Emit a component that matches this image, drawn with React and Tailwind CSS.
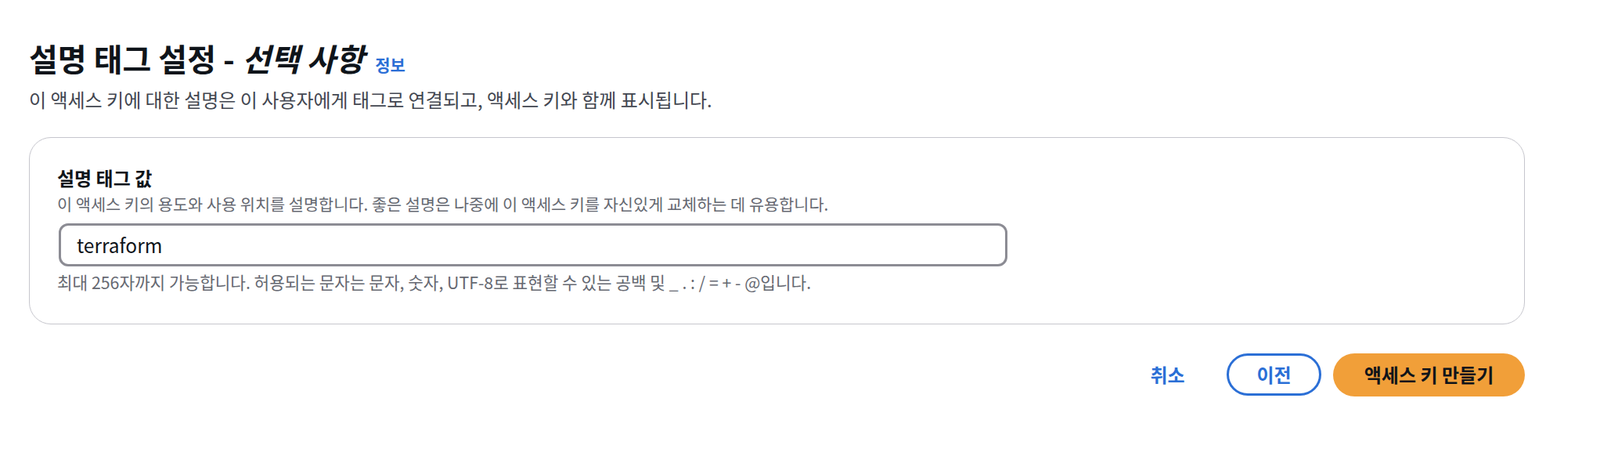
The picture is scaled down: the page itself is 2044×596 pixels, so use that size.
import { useState } from "react";

const font = { fontFamily: '"Noto Sans CJK KR", "Noto Sans", sans-serif' };

export default function App() {
  const [desc, setDesc] = useState("terraform");

  return (
    <div className="w-[2044px] min-h-[596px] bg-white pl-[37px] pr-[96px] pt-[50px]" style={font}>
      <div className="flex items-baseline gap-[14px]">
        <h2 className="text-[40px] leading-[48px] font-bold text-[#0f141a]">
          설명 태그 설정 - <span className="italic">선택 사항</span>
        </h2>
        <a href="#" className="text-[21px] font-semibold text-[#2b6fd6]">정보</a>
      </div>
      <p className="mt-[12px] text-[24px] leading-[32px] text-[#424650]">
        이 액세스 키에 대한 설명은 이 사용자에게 태그로 연결되고, 액세스 키와 함께 표시됩니다.
      </p>

      <div className="mt-[32px] rounded-[28px] border border-[#c6c6cd] px-[35px] pt-[35px] pb-[39px]">
        <label className="block text-[24px] leading-[32px] font-bold text-[#0f141a]">설명 태그 값</label>
        <p className="mt-[3px] text-[20.8px] leading-[28px] text-[#656871]">
          이 액세스 키의 용도와 사용 위치를 설명합니다. 좋은 설명은 나중에 이 액세스 키를 자신있게 교체하는 데 유용합니다.
        </p>
        <input
          value={desc}
          onChange={(e) => setDesc(e.target.value)}
          className="mt-[11px] block w-[1212px] h-[55px] ml-[2px] rounded-[12px] border-[3px] border-[#8c8c94] pl-[20px] text-[24.5px] text-[#0f141a] outline-none"
          style={font}
        />
        <p className="mt-[6px] text-[21.3px] leading-[28px] text-[#656871]">
          최대 256자까지 가능합니다. 허용되는 문자는 문자, 숫자, UTF-8로 표현할 수 있는 공백 및 _ . : / = + - @입니다.
        </p>
      </div>

      <div className="mt-[37px] flex items-center justify-end gap-[15px]">
        <button className="w-[121px] h-[54px] text-[24px] font-bold text-[#2b6fd6]">취소</button>
        <button className="w-[121px] h-[54px] rounded-full border-[3px] border-[#2b6fd6] text-[24px] font-bold text-[#2b6fd6]">
          이전
        </button>
        <button className="w-[245px] h-[55px] rounded-full bg-[#f19f39] text-[24px] font-bold text-[#0f141a]">
          액세스 키 만들기
        </button>
      </div>
    </div>
  );
}
